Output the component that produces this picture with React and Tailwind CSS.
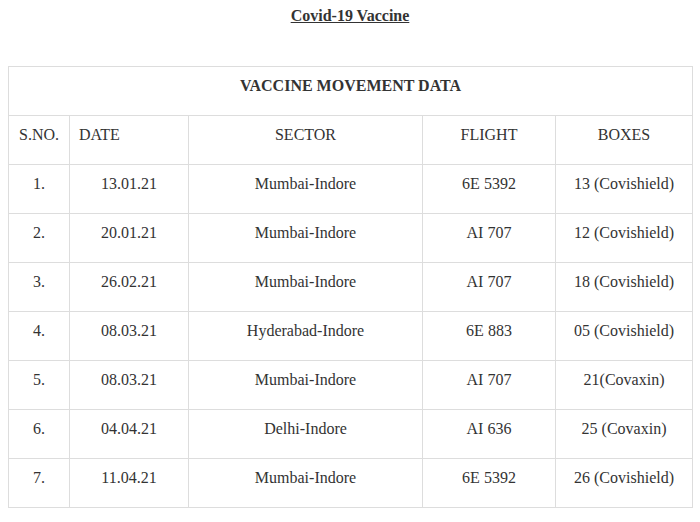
const rows = [
  ["1.", "13.01.21", "Mumbai-Indore", "6E 5392", "13 (Covishield)"],
  ["2.", "20.01.21", "Mumbai-Indore", "AI 707", "12 (Covishield)"],
  ["3.", "26.02.21", "Mumbai-Indore", "AI 707", "18 (Covishield)"],
  ["4.", "08.03.21", "Hyderabad-Indore", "6E 883", "05 (Covishield)"],
  ["5.", "08.03.21", "Mumbai-Indore", "AI 707", "21(Covaxin)"],
  ["6.", "04.04.21", "Delhi-Indore", "AI 636", "25 (Covaxin)"],
  ["7.", "11.04.21", "Mumbai-Indore", "6E 5392", "26 (Covishield)"],
];

const cell = "border border-[#dddddd] pt-[7px] pb-[17px] px-[9px] leading-[24px] align-top";

export default function App() {
  return (
    <div className="min-h-[522px] w-[700px] bg-white text-[#333333] text-[16px] font-['Liberation_Serif',serif]">
      {/* Title */}
      <div className="pt-[4px] text-center leading-[24px]">
        <span className="font-bold underline">Covid-19 Vaccine</span>
      </div>

      {/* Table */}
      <div className="px-[8px] pt-[38px]">
        <table className="w-[684px] table-fixed border-collapse">
          <colgroup>
            <col className="w-[61px]" />
            <col className="w-[119px]" />
            <col className="w-[234px]" />
            <col className="w-[133px]" />
            <col className="w-[137px]" />
          </colgroup>
          <tbody>
            <tr>
              <td colSpan={5} className={`${cell} text-center font-bold`}>
                VACCINE MOVEMENT DATA
              </td>
            </tr>
            <tr>
              <td className={`${cell} text-center`}>S.NO.</td>
              <td className={`${cell} text-left`}>DATE</td>
              <td className={`${cell} text-center`}>SECTOR</td>
              <td className={`${cell} text-center`}>FLIGHT</td>
              <td className={`${cell} text-center`}>BOXES</td>
            </tr>
            {rows.map((r) => (
              <tr key={r[0]}>
                {r.map((v, i) => (
                  <td key={i} className={`${cell} text-center whitespace-nowrap`}>
                    {v}
                  </td>
                ))}
              </tr>
            ))}
          </tbody>
        </table>
      </div>
    </div>
  );
}
